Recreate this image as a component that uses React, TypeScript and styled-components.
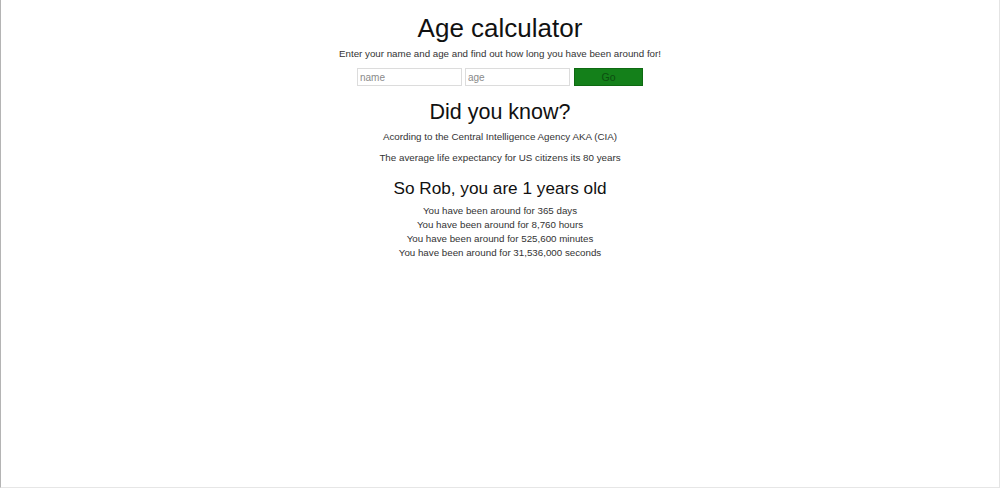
import React from "react";
import styled, { createGlobalStyle } from "styled-components";

const Global = createGlobalStyle`
  html, body { margin: 0; padding: 0; background: #fff; }
  body { font-family: "Liberation Sans", Arial, Helvetica, sans-serif; }
`;

const Frame = styled.div`
  box-sizing: border-box;
  width: 1000px;
  height: 488px;
  border-left: 1px solid #b4b4b4;
  border-right: 1px solid #e4e4e4;
  border-bottom: 1px solid #e6e6e6;
  display: flex;
  flex-direction: column;
  align-items: center;
  color: #222;
`;

const Title = styled.h1`
  margin: 13px 0 0;
  font-size: 26px;
  line-height: 30px;
  font-weight: 400;
  color: #111;
`;

const Lead = styled.p`
  margin: 4px 0 0;
  font-size: 9.75px;
  line-height: 14px;
  color: #333;
`;

const Form = styled.form`
  display: flex;
  gap: 3px;
  margin-top: 7px;
`;

const Field = styled.input`
  box-sizing: border-box;
  width: 105px;
  height: 18px;
  border: 1px solid #dcdcdc;
  padding: 0 2px;
  font-family: inherit;
  font-size: 10px;
  color: #333;
  outline: none;
  &::placeholder { color: #8a8a8a; }
`;

const Go = styled.button`
  box-sizing: border-box;
  width: 69px;
  height: 18px;
  margin-left: 1px;
  background: #14801a;
  border: 1px solid #0e6a12;
  color: #0c4f10;
  font-family: inherit;
  font-size: 10.5px;
  padding: 0;
`;

const Heading = styled.h2`
  margin: 13px 0 0;
  font-size: 21.5px;
  line-height: 26px;
  font-weight: 400;
  color: #111;
`;

const Fact = styled.p<{ $top: number }>`
  margin: ${(p) => p.$top}px 0 0;
  font-size: 9.8px;
  line-height: 14px;
  color: #333;
`;

const Result = styled.h3`
  margin: 12px 0 0;
  font-size: 17.2px;
  line-height: 22px;
  font-weight: 400;
  color: #111;
`;

const Stats = styled.ul`
  list-style: none;
  margin: 5px 0 0;
  padding: 0;
  text-align: center;
  font-size: 9.75px;
  line-height: 14px;
  color: #333;
`;

const units = [
  ["365", "days"],
  ["8,760", "hours"],
  ["525,600", "minutes"],
  ["31,536,000", "seconds"],
];

export default function App() {
  return (
    <>
      <Global />
      <Frame>
        <Title>Age calculator</Title>
        <Lead>Enter your name and age and find out how long you have been around for!</Lead>
        <Form onSubmit={(e) => e.preventDefault()}>
          <Field placeholder="name" />
          <Field placeholder="age" />
          <Go type="submit">Go</Go>
        </Form>
        <Heading>Did you know?</Heading>
        <Fact $top={5}>Acording to the Central Intelligence Agency AKA (CIA)</Fact>
        <Fact $top={7}>The average life expectancy for US citizens its 80 years</Fact>
        <Result>So Rob, you are 1 years old</Result>
        <Stats>
          {units.map(([n, u]) => (
            <li key={u}>You have been around for {n} {u}</li>
          ))}
        </Stats>
      </Frame>
    </>
  );
}
